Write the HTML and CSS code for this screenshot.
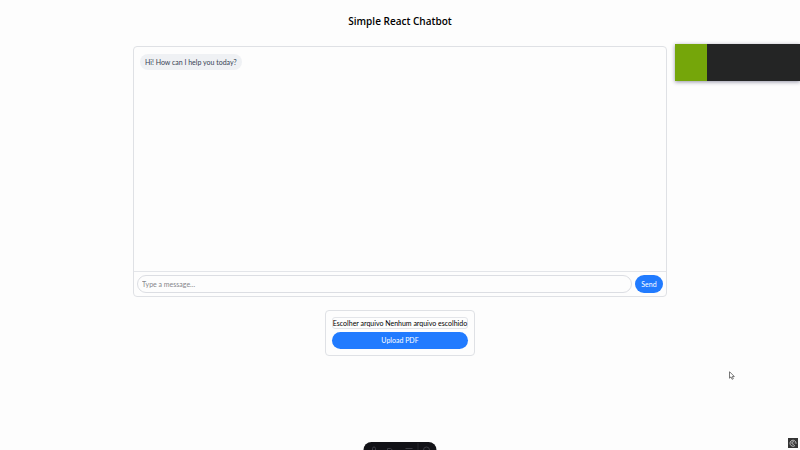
FILE: index.html
```html
<!DOCTYPE html>
<html lang="en">
<head>
<meta charset="utf-8">
<title>Simple React Chatbot</title>
<link rel="stylesheet" href="styles.css">
</head>
<body>
<main class="app">
  <h1 class="title">Simple React Chatbot</h1>
  <section class="chat">
    <div class="messages">
      <p class="bubble">Hi! How can I help you today?</p>
    </div>
    <form class="composer">
      <input class="message-input" type="text" placeholder="Type a message..." aria-label="Message">
      <button class="button" type="button">Send</button>
    </form>
  </section>
  <form class="upload">
    <label class="file-field">Escolher arquivo Nenhum arquivo escolhido<input class="file-input" type="file"></label>
    <button class="button" type="button">Upload PDF</button>
  </form>
</main>
<div class="notice"><div class="notice-accent"></div></div>
<div class="dock">
  <svg class="dock-icons" viewBox="0 0 73 8" fill="none" stroke="#3c3c44" aria-hidden="true">
    <path d="M9 8V6.500a1.500 1.500 0 0 1 3 0V8M24 8V6.500h3l2 1.500M42 6.500h7M60 8a3 3 0 0 1 6 0"/>
    <path d="M54.500 1v7" stroke="#26262d"/>
  </svg>
</div>
<svg class="cursor" viewBox="0 0 6 9" aria-hidden="true"><path d="M.5.7v6.500l1.500-1.300 1.100 2.400 1.200-.6-1-2.200h2z" fill="#fff" stroke="#555" stroke-width=".8"/></svg>
<svg class="badge" viewBox="0 0 10 10" aria-hidden="true"><rect width="10" height="10" fill="#343434"/><path d="M7 7.500A3 3 0 1 1 8 5v.8M6.200 5.800A1.300 1.300 0 1 1 6.200 4.200" fill="none" stroke="#ddd" stroke-width=".8"/></svg>
</body>
</html>
```
FILE: styles.css
```css
* { box-sizing: border-box; }

body {
  margin: 0;
  min-height: 100vh;
  overflow: hidden;
  background: #fdfdfd;
  color: #000;
  font: 7px/10px Lato, "Open Sans", sans-serif;
}

.app {
  display: flex;
  flex-direction: column;
  align-items: center;
  padding: 14px 16px;
}

.title {
  margin: 0 0 18px;
  font-family: "Open Sans", "Noto Sans", sans-serif;
  font-size: 10px;
  line-height: 14px;
  font-weight: 600;
}

.chat {
  width: 100%;
  max-width: 534px;
  border: 1px solid #dfe1e5;
  border-radius: 4px;
}

.messages {
  height: calc(50vh - 1px);
  padding: 7px 6px;
}

.bubble {
  width: fit-content;
  margin: 0;
  padding: 3px 5px;
  border-radius: 8px;
  background: #eff1f4;
  color: #364153;
}

.composer {
  display: flex;
  gap: 3px;
  padding: 3px;
  border-top: 1px solid #e3e5e9;
}

.message-input {
  flex: 1;
  min-width: 0;
  height: 18px;
  padding: 0 4px;
  border: 1px solid #dcdee3;
  border-radius: 9px;
  background: transparent;
  font: inherit;
}

.message-input::placeholder { color: #85858a; }

.button {
  padding: 4px 6px;
  border: 0;
  border-radius: 9px;
  background: #217bff;
  color: #fff;
  font: inherit;
}

.composer .button { min-width: 28px; }

.upload {
  display: flex;
  flex-direction: column;
  gap: 3px;
  margin-top: 13px;
  padding: 6px;
  border: 1px solid #dfe1e5;
  border-radius: 4px;
}

.upload .button { padding: 3px 6px 4px; }

.file-field {
  position: relative;
  border: 1px solid #e3e5e9;
  border-radius: 3px;
  white-space: nowrap;
}

.file-input {
  position: absolute;
  inset: 0;
  width: 100%;
  opacity: 0;
}

.notice {
  position: fixed;
  top: 44px;
  right: 0;
  display: flex;
  width: 125px;
  height: 37px;
  background: #242525;
  box-shadow: 0 1px 4px rgb(20 20 60 / 45%);
}

.notice-accent {
  width: 32px;
  background: #75a60a;
}

.dock {
  position: fixed;
  bottom: 0;
  left: 50%;
  width: 73px;
  height: 8px;
  transform: translateX(-50%);
  border-radius: 8px 8px 0 0;
  background: #121217;
}

.dock-icons { display: block; width: 100%; }

.cursor {
  position: fixed;
  top: 371px;
  left: 729px;
  width: 6px;
  height: 9px;
}

.badge {
  position: fixed;
  right: 2px;
  bottom: 2px;
  width: 10px;
  height: 10px;
}
```
